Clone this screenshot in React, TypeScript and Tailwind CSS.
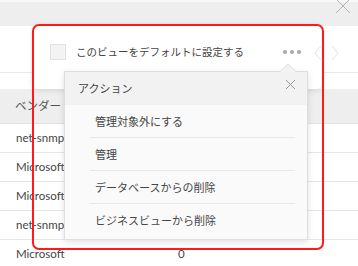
import React from "react";

const jp = "font-['Noto_Sans_CJK_JP','Noto_Sans',sans-serif]";

function Row({ name, val }: { name: string; val?: string }) {
  return (
    <div className="flex h-[29px] items-center border-b border-[#e6e6e6] text-[11.5px] text-[#444] font-['Lato',sans-serif]">
      <div className="w-[162px] pl-[16px]">{name}</div>
      <div className="pl-[16px]">{val ?? ""}</div>
    </div>
  );
}

export default function App() {
  const items = ["管理対象外にする", "管理", "データベースからの削除", "ビジネスビューから削除"];
  return (
    <div className="relative w-[358px] h-[266px] overflow-hidden bg-white">
      {/* background page */}
      <div className="h-[2px] bg-[#f7f7f7]" />
      <div className="h-[24px] bg-[#eeeeee]" />
      <div className="h-[47px] border-b border-[#e8e8e8]" />
      <div className="h-[16px]" />
      <div className={`flex h-[35px] items-center bg-[#eeeeee] border-b border-[#e2e2e2] pl-[15px] text-[11.5px] text-[#555] ${jp}`}>
        ベンダー
      </div>
      <Row name="net-snmp" />
      <Row name="Microsoft" />
      <Row name="Microsoft" />
      <Row name="net-snmp" />
      <Row name="Microsoft" val="0" />

      {/* top close X */}
      <svg className="absolute left-[335px] top-[-2px]" width="16" height="16" viewBox="0 0 16 16">
        <path d="M1 1 L15 15 M15 1 L1 15" stroke="#b5b5b5" strokeWidth="1" fill="none" />
      </svg>

      {/* toolbar panel */}
      <div className="absolute left-[33px] top-[25px] w-[289px] h-[64px] bg-white shadow-[0_1px_6px_rgba(0,0,0,0.12)] rounded-[5px]">
        <div className="flex items-center h-[54px] pl-[17px] pr-[21px]">
          <div className="w-[16px] h-[16px] border border-[#e3e3e3] bg-[#f3f3f3]" />
          <div className={`ml-[10px] text-[10.5px] text-[#444] ${jp}`}>このビューをデフォルトに設定する</div>
          <div className="ml-auto flex gap-[3px]">
            <div className="w-[4px] h-[4px] rounded-full bg-[#a3a7b0]" />
            <div className="w-[4px] h-[4px] rounded-full bg-[#a3a7b0]" />
            <div className="w-[4px] h-[4px] rounded-full bg-[#a3a7b0]" />
          </div>
        </div>
      </div>

      {/* faint chevrons */}
      <svg className="absolute left-[313px] top-[44px]" width="28" height="18" viewBox="0 0 28 18">
        <path d="M8 2 L2 9 L8 16" stroke="#e2e2e2" strokeWidth="1" fill="none" />
        <path d="M19 2 L25 9 L19 16" stroke="#e2e2e2" strokeWidth="1" fill="none" />
      </svg>

      {/* menu popup */}
      <div className="absolute left-[64px] top-[71px] w-[244px] h-[169px] border border-[#dedede] bg-[#fafafa] shadow-[0_2px_6px_rgba(0,0,0,0.12)]">
        <div className={`flex h-[33px] items-center bg-[#f2f2f2] pl-[13px] text-[11px] text-[#444] ${jp}`}>
          アクション
          <svg className="absolute left-[220px] top-[7px]" width="11" height="11" viewBox="0 0 11 11">
            <path d="M1 1 L10 10 M10 1 L1 10" stroke="#9a9a9a" strokeWidth="1" fill="none" />
          </svg>
        </div>
        {items.map((t, i) => (
          <div key={t} className={`ml-[25px] mr-[12px] h-[33px] flex items-center pl-[5px] text-[11px] text-[#444] ${jp} ${i < items.length - 1 ? "border-b border-[#e8e8e8]" : ""}`}>
            {t}
          </div>
        ))}
        {/* caret */}
        <svg className="absolute left-[214px] top-[-9px]" width="18" height="10" viewBox="0 0 18 10">
          <path d="M0 9.5 L9 1 L18 9.5" fill="#f2f2f2" stroke="#dedede" strokeWidth="1" />
          <rect x="0" y="9.5" width="18" height="1" fill="#f2f2f2" />
        </svg>
      </div>

      {/* red annotation */}
      <div className="absolute left-[32px] top-[24px] w-[292px] h-[226px] border-2 border-[#ff1a1a] rounded-[7px] pointer-events-none" />
    </div>
  );
}
